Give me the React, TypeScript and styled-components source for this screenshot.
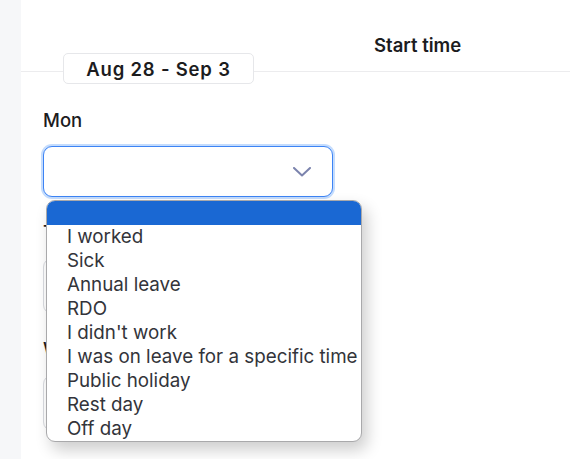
import React from 'react';
import styled, { createGlobalStyle } from 'styled-components';

const GlobalStyle = createGlobalStyle`
  html, body {
    margin: 0;
    padding: 0;
    background: #ffffff;
    font-family: Inter, "Noto Sans", sans-serif;
    color: #1c1c1e;
  }
`;

const Page = styled.div`
  display: flex;
  height: 459px;
  overflow: hidden;
`;

const SideRail = styled.aside`
  width: 21px;
  flex-shrink: 0;
  background: #f6f7f9;
`;

const Main = styled.main`
  flex: 1;
  background: #ffffff;
`;

const TableHeader = styled.header`
  height: 72px;
  box-sizing: border-box;
  border-bottom: 1px solid #ececee;
  display: flex;
  align-items: flex-end;
  padding: 0 0 15px 353px;
`;

const HeaderCell = styled.span`
  font-size: 18.5px;
  font-weight: 600;
`;

const WeekChip = styled.div`
  position: relative;
  z-index: 1;
  width: 191px;
  height: 31px;
  box-sizing: border-box;
  margin: -19px 0 0 42px;
  border: 1px solid #e6e7ea;
  border-radius: 5px;
  background: #ffffff;
  display: flex;
  align-items: center;
  justify-content: center;
  font-size: 18.5px;
  font-weight: 600;
  letter-spacing: 0.8px;
`;

const Form = styled.section`
  display: flex;
  flex-direction: column;
  padding: 25px 0 0 22px;
`;

const Field = styled.div`
  display: flex;
  flex-direction: column;
  margin-bottom: 24px;
`;

const Label = styled.label`
  font-size: 18.5px;
  font-weight: 500;
  line-height: 22px;
  margin-bottom: 15px;
`;

const SelectWrap = styled.div`
  position: relative;
  width: 290px;
`;

const SelectBox = styled.div<{ $focused?: boolean; $height?: number }>`
  height: ${(p) => p.$height ?? 51}px;
  box-sizing: border-box;
  border: 1.5px solid ${(p) => (p.$focused ? '#3d84f5' : '#d9dbe0')};
  border-radius: 9px;
  background: #ffffff;
  box-shadow: ${(p) => (p.$focused ? '0 0 0 2px #c4dcfd' : 'none')};
  display: flex;
  align-items: center;
  justify-content: flex-end;
  padding-right: 21px;
`;

const ListBox = styled.ul`
  position: absolute;
  z-index: 5;
  top: calc(100% + 3px);
  left: 3px;
  width: 316px;
  margin: 0;
  padding: 0;
  list-style: none;
  box-sizing: border-box;
  border: 1.5px solid #a9a9ab;
  border-radius: 9px;
  background: #ffffff;
  overflow: hidden;
  box-shadow: 5px 8px 16px rgba(0, 0, 0, 0.2);
`;

const Option = styled.li<{ $active?: boolean }>`
  height: 24px;
  line-height: 24px;
  padding-left: 20px;
  font-size: 18.8px;
  color: ${(p) => (p.$active ? '#ffffff' : '#33343a')};
  background: ${(p) => (p.$active ? '#1a68d3' : 'transparent')};
  white-space: nowrap;
`;

const Chevron = () => (
  <svg width="18" height="10" viewBox="0 0 18 10" fill="none">
    <path d="M1 1l8 7.5L17 1" stroke="#7b83ad" strokeWidth="2" strokeLinecap="round" strokeLinejoin="round" />
  </svg>
);

const options = [
  '',
  'I worked',
  'Sick',
  'Annual leave',
  'RDO',
  "I didn't work",
  'I was on leave for a specific time',
  'Public holiday',
  'Rest day',
  'Off day',
];

export default function App() {
  return (
    <>
      <GlobalStyle />
      <Page>
        <SideRail />
        <Main>
          <TableHeader>
            <HeaderCell>Start time</HeaderCell>
          </TableHeader>
          <WeekChip>Aug 28 - Sep 3</WeekChip>
          <Form>
            <Field>
              <Label>Mon</Label>
              <SelectWrap>
                <SelectBox $focused>
                  <Chevron />
                </SelectBox>
                <ListBox>
                  {options.map((o, i) => (
                    <Option key={i} $active={i === 0}>
                      {o || '\u00a0'}
                    </Option>
                  ))}
                </ListBox>
              </SelectWrap>
            </Field>
            <Field>
              <Label>Type</Label>
              <SelectWrap>
                <SelectBox $height={56}>
                  <Chevron />
                </SelectBox>
              </SelectWrap>
            </Field>
            <Field>
              <Label>Work hours</Label>
              <SelectWrap>
                <SelectBox $height={56}>
                  <Chevron />
                </SelectBox>
              </SelectWrap>
            </Field>
          </Form>
        </Main>
      </Page>
    </>
  );
}
